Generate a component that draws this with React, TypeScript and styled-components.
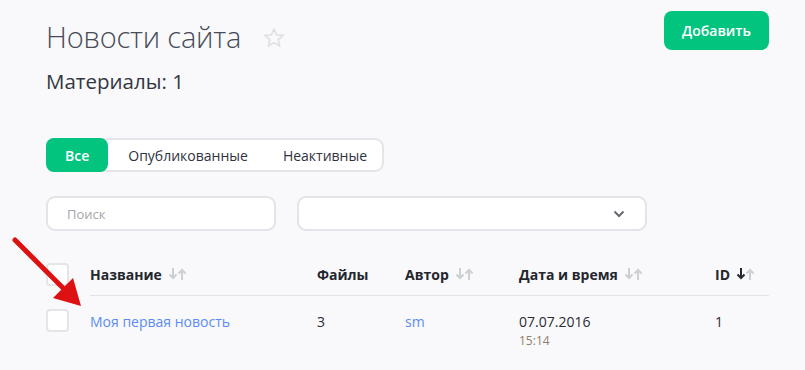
import React from 'react';
import styled, { createGlobalStyle } from 'styled-components';

const GlobalStyle = createGlobalStyle`
  html, body {
    margin: 0;
    background: #f9f9fb;
    font-family: "Open Sans", "Noto Sans", sans-serif;
  }
`;

const Page = styled.div`
  position: relative;
  width: 805px;
  height: 370px;
  padding: 11px 36px 0 46px;
  box-sizing: border-box;
  overflow: hidden;
`;

const Header = styled.div`
  display: flex;
  justify-content: space-between;
  align-items: flex-start;
`;

const TitleRow = styled.div`
  display: flex;
  align-items: center;
  gap: 22px;
  margin-top: 6px;
`;

const Title = styled.h1`
  margin: 0;
  font-size: 29px;
  font-weight: 300;
  color: #474c57;
  line-height: 40px;
  letter-spacing: -0.2px;
`;

const Counter = styled.div`
  margin-top: 11px;
  font-size: 20.5px;
  color: #333740;
  line-height: 26px;
`;

const AddButton = styled.button`
  width: 105px;
  height: 39px;
  border: none;
  border-radius: 8px;
  background: #02c47f;
  color: #fff;
  font-family: inherit;
  font-size: 14px;
  font-weight: 600;
  cursor: pointer;
`;

const Tabs = styled.div`
  display: inline-flex;
  margin-top: 44px;
  height: 34px;
  border: 2px solid #e4e4e9;
  border-radius: 9px;
  box-sizing: border-box;
  background: #fff;
  align-items: stretch;
`;

const Tab = styled.div<{ $active?: boolean; $pad: string }>`
  display: flex;
  align-items: center;
  padding: ${p => p.$pad};
  margin: ${p => (p.$active ? '-2px 0 -2px -2px' : '0')};
  border-radius: 8px;
  font-size: 14px;
  color: ${p => (p.$active ? '#fff' : '#2f3340')};
  background: ${p => (p.$active ? '#02c47f' : 'transparent')};
  font-weight: ${p => (p.$active ? 600 : 400)};
`;

const Filters = styled.div`
  display: flex;
  gap: 21px;
  margin-top: 24px;
`;

const Field = styled.div<{ $w: number }>`
  width: ${p => p.$w}px;
  height: 35px;
  box-sizing: border-box;
  border: 2px solid #e3e3e8;
  border-radius: 9px;
  background: #fff;
  display: flex;
  align-items: center;
  justify-content: space-between;
  padding: 0 20px 0 19px;
  font-size: 13px;
  color: #a4a6ab;
`;

const Table = styled.div`
  display: grid;
  grid-template-columns: 44px 227px 88px 114px 196px 54px;
  margin-top: 31px;
`;

const Box = styled.div`
  width: 23px;
  height: 23px;
  box-sizing: border-box;
  border: 2px solid #e4e4e9;
  border-radius: 4px;
  background: #fff;
`;

const CheckCell = styled.div<{ $head?: boolean }>`
  padding-top: ${p => (p.$head ? '1px' : '13px')};
  height: ${p => (p.$head ? '33px' : 'auto')};
  box-sizing: border-box;
`;

const HeadCell = styled.div`
  display: flex;
  align-items: flex-start;
  gap: 6px;
  padding-top: 3px;
  height: 34px;
  box-sizing: border-box;
  border-bottom: 1px solid #e3e3e8;
  font-size: 14px;
  font-weight: 700;
  color: #24262d;
`;

const Sort = styled.span`
  display: inline-flex;
  margin-top: 2px;
`;

const Cell = styled.div`
  padding-top: 16px;
  font-size: 14px;
  color: #2a2c33;
  line-height: 19px;
`;

const Link = styled.a`
  color: #5b8cf3;
  text-decoration: none;
`;

const Time = styled.div`
  margin-top: 2px;
  font-size: 12px;
  color: #8f8068;
  line-height: 16px;
`;

const Arrow = styled.svg`
  position: absolute;
  left: 9px;
  top: 234px;
`;

function SortIcons({ down }: { down?: boolean }) {
  return (
    <Sort>
      <svg width="20" height="14" viewBox="0 0 20 14">
        <g fill="none" strokeWidth="2" strokeLinecap="butt">
          <path d="M5 1v10M1.5 7.5L5 11l3.5-3.5" stroke={down ? '#262830' : '#cdcfd3'} />
          <path d="M14 13V3M10.5 6.5L14 3l3.5 3.5" stroke="#cdcfd3" />
        </g>
      </svg>
    </Sort>
  );
}

function Star() {
  return (
    <svg width="22" height="21" viewBox="0 0 24 23">
      <path
        d="M12 2l2.9 6.6 7.1.6-5.4 4.7 1.6 7-6.2-3.7-6.2 3.7 1.6-7L2 9.2l7.1-.6z"
        fill="none"
        stroke="#e0e1e6"
        strokeWidth="2"
        strokeLinejoin="round"
      />
    </svg>
  );
}

export default function App() {
  return (
    <>
      <GlobalStyle />
      <Page>
        <Header>
          <div>
            <TitleRow>
              <Title>Новости сайта</Title>
              <Star />
            </TitleRow>
            <Counter>Материалы: 1</Counter>
          </div>
          <AddButton>Добавить</AddButton>
        </Header>

        <Tabs>
          <Tab $active $pad="0 19px 0 19px">Все</Tab>
          <Tab $pad="0 17px 0 20px">Опубликованные</Tab>
          <Tab $pad="0 15px 0 18px">Неактивные</Tab>
        </Tabs>

        <Filters>
          <Field $w={230}>Поиск</Field>
          <Field $w={350}>
            <span />
            <svg width="12" height="8" viewBox="0 0 12 8">
              <path d="M1.5 1.5L6 6l4.5-4.5" fill="none" stroke="#666970" strokeWidth="2" />
            </svg>
          </Field>
        </Filters>

        <Table>
          <CheckCell $head>
            <Box />
          </CheckCell>
          <HeadCell>
            Название <SortIcons />
          </HeadCell>
          <HeadCell>Файлы</HeadCell>
          <HeadCell>
            Автор <SortIcons />
          </HeadCell>
          <HeadCell>
            Дата и время <SortIcons />
          </HeadCell>
          <HeadCell>
            ID <SortIcons down />
          </HeadCell>

          <CheckCell>
            <Box />
          </CheckCell>
          <Cell>
            <Link href="#">Моя первая новость</Link>
          </Cell>
          <Cell>3</Cell>
          <Cell>
            <Link href="#">sm</Link>
          </Cell>
          <Cell>
            07.07.2016
            <Time>15:14</Time>
          </Cell>
          <Cell>1</Cell>
        </Table>

        <Arrow width="80" height="80" viewBox="0 0 80 80">
          <path d="M6 6L58 58" stroke="#dd1111" strokeWidth="5" strokeLinecap="round" />
          <path d="M72 72L44 64L64 44Z" fill="#dd1111" />
        </Arrow>
      </Page>
    </>
  );
}
